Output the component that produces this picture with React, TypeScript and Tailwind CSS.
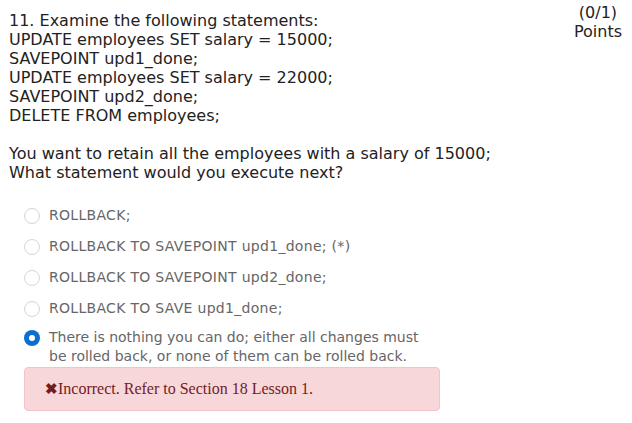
export default function App() {
  const options = [
    "ROLLBACK;",
    "ROLLBACK TO SAVEPOINT upd1_done; (*)",
    "ROLLBACK TO SAVEPOINT upd2_done;",
    "ROLLBACK TO SAVE upd1_done;",
  ];

  return (
    <div className="w-[632px] h-[423px] bg-white text-[#222] font-['DejaVu_Sans',sans-serif] overflow-hidden">
      <div className="flex justify-between">
        <div className="pl-[9px] pt-[11px] text-[16px] leading-[19px]">
          <p>11. Examine the following statements:</p>
          <p>UPDATE employees SET salary = 15000;</p>
          <p>SAVEPOINT upd1_done;</p>
          <p>UPDATE employees SET salary = 22000;</p>
          <p>SAVEPOINT upd2_done;</p>
          <p>DELETE FROM employees;</p>
          <p className="mt-[19px]">You want to retain all the employees with a salary of 15000;</p>
          <p>What statement would you execute next?</p>
        </div>
        <div className="pr-[10px] pt-[3px] text-[16px] leading-[19px] text-center">
          <p>(0/1)</p>
          <p>Points</p>
        </div>
      </div>

      <div className="pl-[24px] pt-[18px] text-[14px] text-[#666]">
        {options.map((o) => (
          <div key={o} className="flex items-center gap-[9px] h-[31px]">
            <span className="w-[16px] h-[16px] rounded-full border border-[#d6d6d6] bg-white shrink-0" />
            <span className="tracking-[0.3px]">{o}</span>
          </div>
        ))}
        <div className="flex items-start gap-[9px] pt-[4px]">
          <span className="w-[16px] h-[16px] rounded-full bg-[#0b6fcf] shrink-0 mt-[2px] flex items-center justify-center">
            <span className="w-[6px] h-[6px] rounded-full bg-white" />
          </span>
          <span className="leading-[19px]">
            There is nothing you can do; either all changes must
            <br />
            be rolled back, or none of them can be rolled back.
          </span>
        </div>
        <div className="mt-[1px] w-[416px] h-[44px] bg-[#f8d7da] border border-[#f5c2c7] rounded-[4px] flex items-center pl-[20px] font-['Liberation_Serif',serif] text-[16px] text-[#721c24]">
          <span className="text-[15px] font-bold">✖</span>
          Incorrect. Refer to Section 18 Lesson 1.
        </div>
      </div>
    </div>
  );
}
